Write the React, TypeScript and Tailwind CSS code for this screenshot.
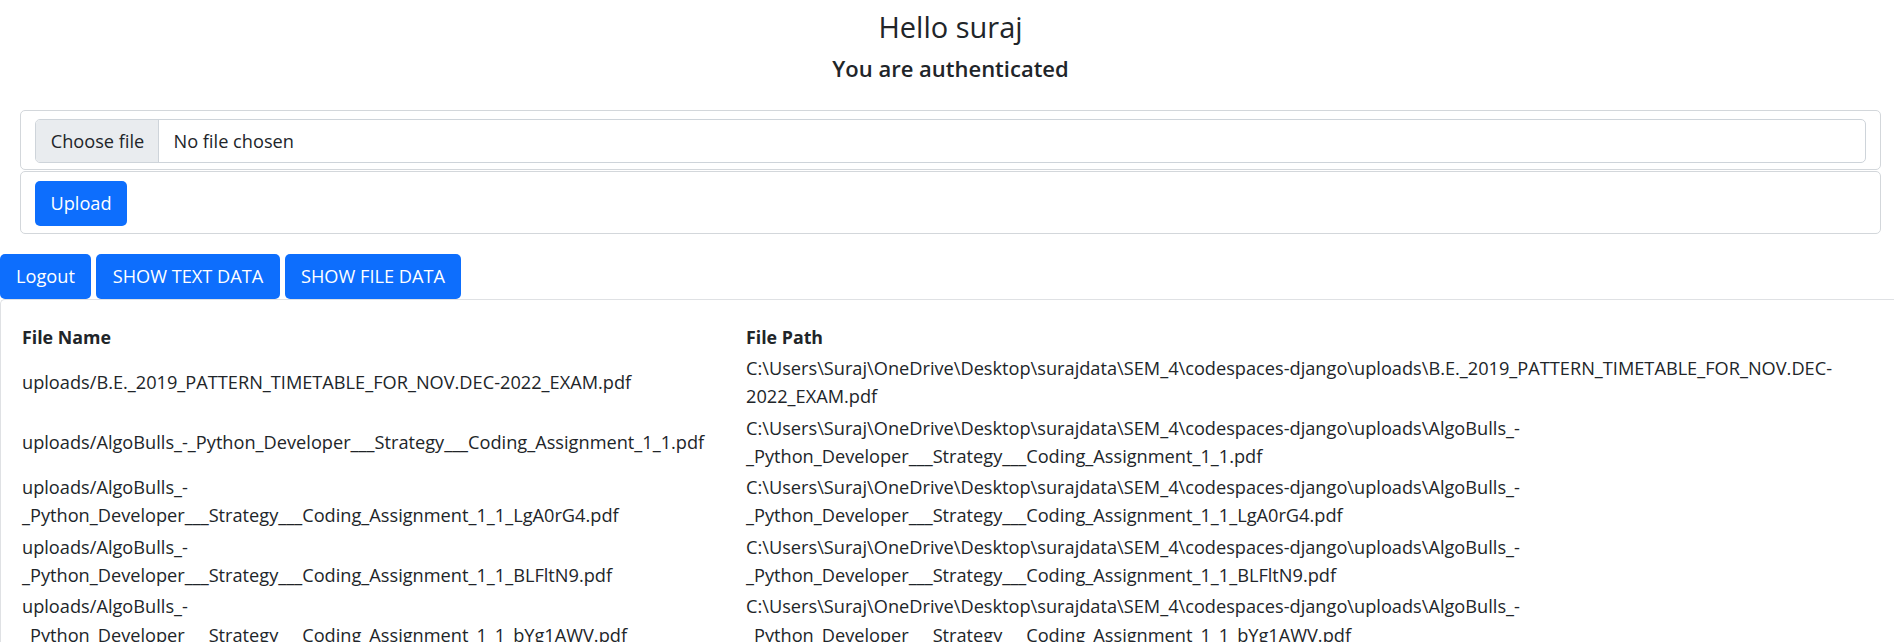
// Dashboard: saudação, upload de arquivo e tabela com os arquivos enviados
const files = [
  {
    name: ['uploads/B.E._2019_PATTERN_TIMETABLE_FOR_NOV.DEC-2022_EXAM.pdf'],
    path: [
      'C:\\Users\\Suraj\\OneDrive\\Desktop\\surajdata\\SEM_4\\codespaces-django\\uploads\\B.E._2019_PATTERN_TIMETABLE_FOR_NOV.DEC-',
      '2022_EXAM.pdf',
    ],
  },
  {
    name: ['uploads/AlgoBulls_-_Python_Developer___Strategy___Coding_Assignment_1_1.pdf'],
    path: [
      'C:\\Users\\Suraj\\OneDrive\\Desktop\\surajdata\\SEM_4\\codespaces-django\\uploads\\AlgoBulls_-',
      '_Python_Developer___Strategy___Coding_Assignment_1_1.pdf',
    ],
  },
  {
    name: ['uploads/AlgoBulls_-', '_Python_Developer___Strategy___Coding_Assignment_1_1_LgA0rG4.pdf'],
    path: [
      'C:\\Users\\Suraj\\OneDrive\\Desktop\\surajdata\\SEM_4\\codespaces-django\\uploads\\AlgoBulls_-',
      '_Python_Developer___Strategy___Coding_Assignment_1_1_LgA0rG4.pdf',
    ],
  },
  {
    name: ['uploads/AlgoBulls_-', '_Python_Developer___Strategy___Coding_Assignment_1_1_BLFltN9.pdf'],
    path: [
      'C:\\Users\\Suraj\\OneDrive\\Desktop\\surajdata\\SEM_4\\codespaces-django\\uploads\\AlgoBulls_-',
      '_Python_Developer___Strategy___Coding_Assignment_1_1_BLFltN9.pdf',
    ],
  },
  {
    name: ['uploads/AlgoBulls_-', '_Python_Developer___Strategy___Coding_Assignment_1_1_bYg1AWV.pdf'],
    path: [
      'C:\\Users\\Suraj\\OneDrive\\Desktop\\surajdata\\SEM_4\\codespaces-django\\uploads\\AlgoBulls_-',
      '_Python_Developer___Strategy___Coding_Assignment_1_1_bYg1AWV.pdf',
    ],
  },
];

function Lines({ lines }: { lines: string[] }) {
  return (
    <div>
      {lines.map((l) => (
        <div key={l} className="whitespace-nowrap">
          {l}
        </div>
      ))}
    </div>
  );
}

export default function App() {
  return (
    <div className="h-[642px] overflow-hidden bg-white font-['Open_Sans','Noto_Sans',sans-serif] text-[18.2px] leading-[28.2px] text-[#212529]">
      {/* Header + upload */}
      <div className="ml-[20px] mr-[13px]">
        <div className="pt-[7px] text-center text-[29px] leading-[40px] font-medium">Hello suraj</div>
        <div className="mt-[7px] text-center text-[22px] leading-[28px] font-semibold">You are authenticated</div>

        <div className="mt-[28px] rounded-[5px] border border-[#d3d7db] px-[14px] pt-[8px] pb-[6px]">
          <div className="flex h-[44px] overflow-hidden rounded-[5px] border border-[#ced4da]">
            <div className="flex w-[123px] items-center border-r border-[#ced4da] bg-[#e9ecef] pl-[14.7px]">Choose file</div>
            <div className="flex items-center pl-[14.5px]">No file chosen</div>
          </div>
        </div>
        <div className="mt-[1px] rounded-[5px] border border-[#d3d7db] px-[14px] pt-[9px] pb-[7px]">
          <button className="flex h-[45px] w-[92px] items-center justify-center rounded-[5px] bg-[#0d6efd] text-white">
            Upload
          </button>
        </div>
      </div>

      {/* Actions */}
      <div className="mt-[20px] flex gap-[5px]">
        <button className="flex h-[45px] w-[91px] items-center justify-center rounded-[5px] bg-[#0d6efd] text-white">Logout</button>
        <button className="flex h-[45px] w-[184px] items-center justify-center rounded-[5px] bg-[#0d6efd] text-white">
          SHOW TEXT DATA
        </button>
        <button className="flex h-[45px] w-[176px] items-center justify-center rounded-[5px] bg-[#0d6efd] text-white">
          SHOW FILE DATA
        </button>
      </div>

      {/* Files table */}
      <div className="rounded-tl-[5px] border-t border-l border-[#dfe1e4] pt-[21px] pl-[21px]">
        <div className="grid grid-cols-[724px_1fr]">
          <div className="py-[1.6px] text-[17.8px] font-bold">File Name</div>
          <div className="py-[1.6px] text-[17.8px] font-bold">File Path</div>
          {files.map((f, i) => (
            <div key={i} className="contents">
              <div className="flex items-center py-[1.6px]">
                <Lines lines={f.name} />
              </div>
              <div className="flex items-center py-[1.6px]">
                <Lines lines={f.path} />
              </div>
            </div>
          ))}
        </div>
      </div>
    </div>
  );
}
